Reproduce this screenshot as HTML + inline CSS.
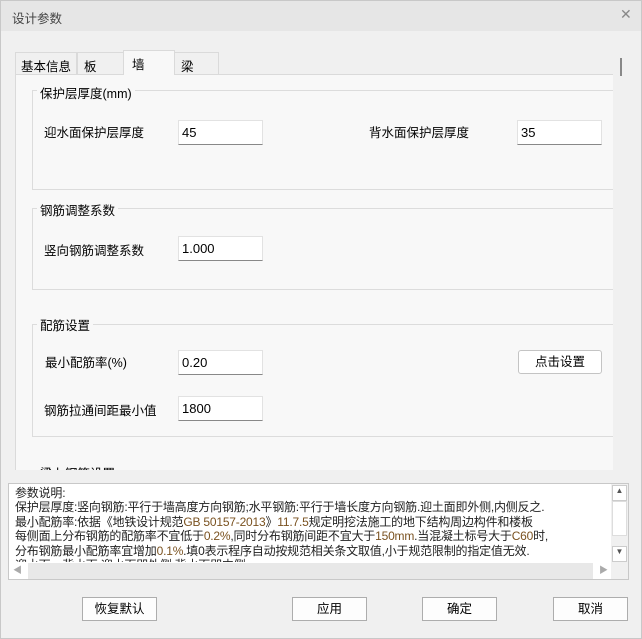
<!DOCTYPE html>
<html><head><meta charset="utf-8"><style>
*{margin:0;padding:0;box-sizing:border-box}
body{width:642px;height:639px;overflow:hidden;background:#f0f0f0;font-family:"Liberation Sans","Noto Sans CJK SC",sans-serif;font-size:12px;color:#000;position:relative}
.a{position:absolute}
.win{left:0;top:0;width:642px;height:639px;border:1px solid #c8c8c8;background:#f0f0f0}
.title{left:1px;top:1px;width:640px;height:30px;background:#e6e6e6}
.tab{top:52px;height:22px;border:1px solid #dadada;border-bottom:none;background:#f0f0f0;font-size:12.5px;padding:3px 0 0 6px;white-space:nowrap;overflow:hidden}
.panel{left:15px;top:74px;width:598px;height:396px;background:#f8f8f8;border-top:1px solid #dadada;border-left:1px solid #dadada;overflow:hidden}
.grp{border:1px solid #dcdcdc;border-right:none}
.gt{font-size:12.5px;background:#f8f8f8;padding:0 3px}
.lbl{font-size:12.5px}
.inp{width:85px;height:25px;background:#fff;border:1px solid #e2e2e2;border-bottom:1px solid #888;font-size:13px;padding:4px 0 0 3px}
.btn{width:75px;height:24px;border:1px solid #adadad;background:#fdfdfd;font-size:12.5px;text-align:center;line-height:22px}
.ta{left:8px;top:483px;width:621px;height:97px;border:1px solid #c8c8c8;background:#fff;overflow:hidden}
.txt{left:6px;top:2px;font-size:12px;line-height:14.4px;white-space:nowrap;color:#222;letter-spacing:-0.2px}
.o{color:#7a5220}
</style></head><body>
<div class="a win"></div>
<div class="a title"></div>
<div class="a" style="left:12px;top:8px;font-size:12.5px;color:#444">设计参数</div>
<div class="a" style="left:620px;top:6px;font-size:14px;color:#888">✕</div>

<div class="a panel">
 <div class="a grp" style="left:16px;top:15px;width:600px;height:100px"></div>
 <div class="a gt" style="left:21px;top:8px">保护层厚度(mm)</div>
 <div class="a lbl" style="left:28px;top:47px">迎水面保护层厚度</div>
 <div class="a inp" style="left:162px;top:45px">45</div>
 <div class="a lbl" style="left:353px;top:47px">背水面保护层厚度</div>
 <div class="a inp" style="left:501px;top:45px">35</div>

 <div class="a grp" style="left:16px;top:133px;width:600px;height:82px"></div>
 <div class="a gt" style="left:21px;top:125px">钢筋调整系数</div>
 <div class="a lbl" style="left:28px;top:165px">竖向钢筋调整系数</div>
 <div class="a inp" style="left:162px;top:161px">1.000</div>

 <div class="a grp" style="left:16px;top:249px;width:600px;height:113px"></div>
 <div class="a gt" style="left:21px;top:240px">配筋设置</div>
 <div class="a lbl" style="left:29px;top:277px">最小配筋率(%)</div>
 <div class="a inp" style="left:162px;top:275px">0.20</div>
 <div class="a btn" style="left:502px;top:275px;width:84px;border-radius:3px;border-color:#c4c4c4;background:#fff">点击设置</div>
 <div class="a lbl" style="left:28px;top:325px">钢筋拉通间距最小值</div>
 <div class="a inp" style="left:162px;top:321px">1800</div>
 <div class="a gt" style="left:21px;top:388px">梁卜钢筋设置</div>
</div>

<div class="a tab" style="left:15px;width:62px;padding-left:5px">基本信息</div>
<div class="a tab" style="left:77px;width:47px">板</div>
<div class="a tab" style="left:123px;top:50px;height:25px;width:52px;background:#f8f8f8;z-index:2;padding-left:8px">墙</div>
<div class="a tab" style="left:174px;width:45px">梁</div>

<div class="a" style="left:613px;top:42px;width:16px;height:428px;background:#f0f0f0"></div>
<div class="a" style="left:620px;top:58px;width:2px;height:18px;background:#888"></div>

<div class="a ta">
 <div class="a txt">参数说明:<br>保护层厚度:竖向钢筋:平行于墙高度方向钢筋;水平钢筋:平行于墙长度方向钢筋.迎土面即外侧,内侧反之.<br>最小配筋率:依据《地铁设计规范<span class="o">GB 50157-2013</span>》<span class="o">11.7.5</span>规定明挖法施工的地下结构周边构件和楼板<br>每侧面上分布钢筋的配筋率不宜低于<span class="o">0.2%</span>,同时分布钢筋间距不宜大于<span class="o">150mm</span>.当混凝土标号大于<span class="o">C60</span>时,<br>分布钢筋最小配筋率宜增加<span class="o">0.1%</span>.填0表示程序自动按规范相关条文取值,小于规范限制的指定值无效.<br>迎水面、背水面:迎水面即外侧,背水面即内侧.</div>
 <div class="a" style="left:0;top:78px;width:602px;height:17px;background:#fff"></div>
 <div class="a" style="left:19px;top:79px;width:565px;height:16px;background:#e8e8e8"></div>
 <div class="a" style="left:4px;top:79px;font-size:9px;color:#aaa">◀</div>
 <div class="a" style="left:590px;top:79px;font-size:9px;color:#aaa">▶</div>
 <div class="a" style="left:602px;top:0;width:17px;height:95px;background:#f0f0f0"></div>
 <div class="a" style="left:603px;top:1px;width:15px;height:16px;background:#fff;border:1px solid #ccc;font-size:8px;text-align:center;color:#555">▲</div>
 <div class="a" style="left:603px;top:17px;width:15px;height:35px;background:#fff;border:1px solid #ddd"></div>
 <div class="a" style="left:603px;top:62px;width:15px;height:16px;background:#fff;border:1px solid #ccc;font-size:8px;text-align:center;color:#555">▼</div>
</div>

<div class="a btn" style="left:82px;top:597px">恢复默认</div>
<div class="a btn" style="left:292px;top:597px">应用</div>
<div class="a btn" style="left:422px;top:597px">确定</div>
<div class="a btn" style="left:553px;top:597px">取消</div>
</body></html>
